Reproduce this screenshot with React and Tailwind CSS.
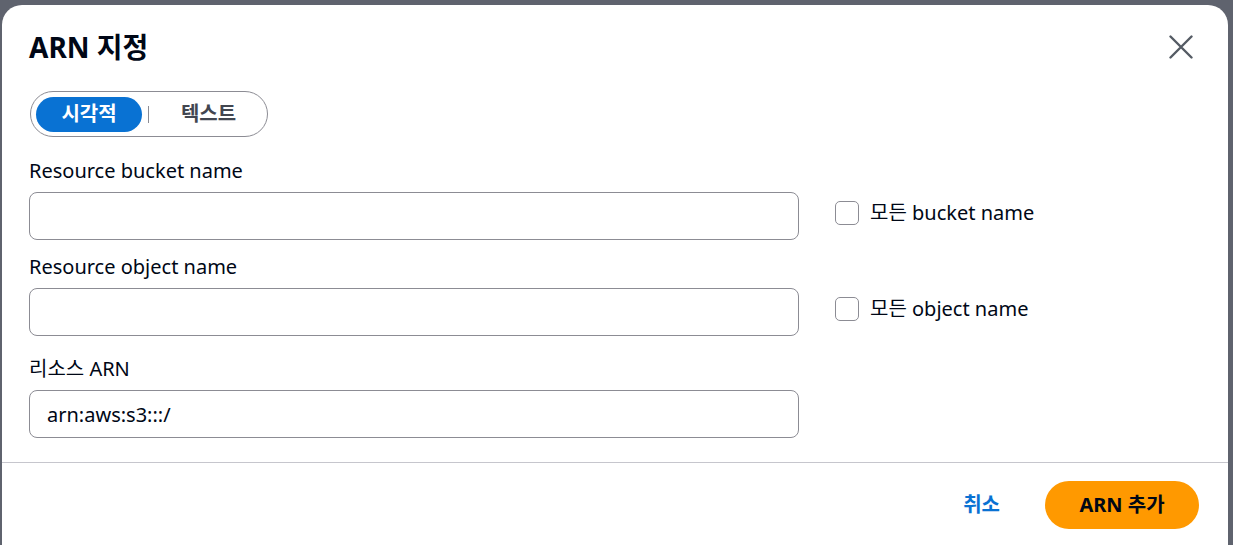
import React, { useState } from 'react';

const font = { fontFamily: '"Noto Sans", "Noto Sans CJK KR", sans-serif' };

function Field({ label, value, check, labelGap }) {
    return (
        <div className={labelGap}>
            <div className="text-[20px] leading-[24px] text-[#000716]">{label}</div>
            <div className="mt-[9px] flex items-center">
                <input
                    readOnly
                    value={value || ''}
                    className="w-[770px] h-[48px] border border-[#8c8c94] rounded-[8px] px-[17px] text-[20px] text-[#000716] outline-none"
                    style={font}
                />
                {check && (
                    <label className="ml-[36px] mb-[6px] flex items-center gap-[11px] text-[20px] text-[#000716]">
                        <span className="w-[24px] h-[24px] border border-[#8c8c94] rounded-[5px] bg-white" />
                        {check}
                    </label>
                )}
            </div>
        </div>
    );
}

export default function App() {
    const [mode, setMode] = useState('visual');

    return (
        <div className="w-[1233px] h-[545px] overflow-hidden bg-[#5f636e] pt-[5px] pl-[2px] pr-[5px]" style={font}>
            <div className="bg-white rounded-[20px] h-[560px]">
                {/* header */}
                <div className="flex items-start justify-between pl-[27px] pr-[35px] pt-[24px]">
                    <h1 className="text-[28px] leading-[36px] font-bold text-[#000716]">ARN 지정</h1>
                    <button className="mt-[6px] text-[#545b64]">
                        <svg width="24" height="24" viewBox="0 0 24 24" fill="none" stroke="currentColor" strokeWidth="2.4" strokeLinecap="round">
                            <path d="M1.5 1.5 L22.5 22.5 M22.5 1.5 L1.5 22.5" />
                        </svg>
                    </button>
                </div>

                <div className="pl-[27px]">
                    {/* segmented control */}
                    <div className="ml-[1px] mt-[26px] inline-flex items-center h-[46px] border border-[#8c8c94] rounded-full px-[5px]">
                        <button
                            onClick={() => setMode('visual')}
                            className={`h-[35px] w-[106px] rounded-full text-[20px] font-bold ${mode === 'visual' ? 'bg-[#0972d3] text-white' : 'text-[#424650]'}`}
                        >
                            시각적
                        </button>
                        <span className="mx-[6px] w-px h-[17px] bg-[#8c8c94]" />
                        <button
                            onClick={() => setMode('text')}
                            className={`h-[35px] w-[107px] rounded-full text-[20px] font-bold ${mode === 'text' ? 'bg-[#0972d3] text-white' : 'text-[#424650]'}`}
                        >
                            텍스트
                        </button>
                    </div>

                    <Field labelGap="mt-[22px]" label="Resource bucket name" check="모든 bucket name" />
                    <Field labelGap="mt-[15px]" label="Resource object name" check="모든 object name" />
                    <Field labelGap="mt-[21px]" label="리소스 ARN" value="arn:aws:s3:::/" />
                </div>

                {/* footer */}
                <div className="mt-[24px] border-t border-[#c6c6cd] flex items-center justify-end gap-[45px] pt-[18px] pr-[29px]">
                    <button className="text-[20px] font-bold text-[#0972d3]">취소</button>
                    <button className="w-[154px] h-[48px] rounded-full bg-[#ff9900] text-[20px] font-bold text-[#000716]">ARN 추가</button>
                </div>
            </div>
        </div>
    );
}
